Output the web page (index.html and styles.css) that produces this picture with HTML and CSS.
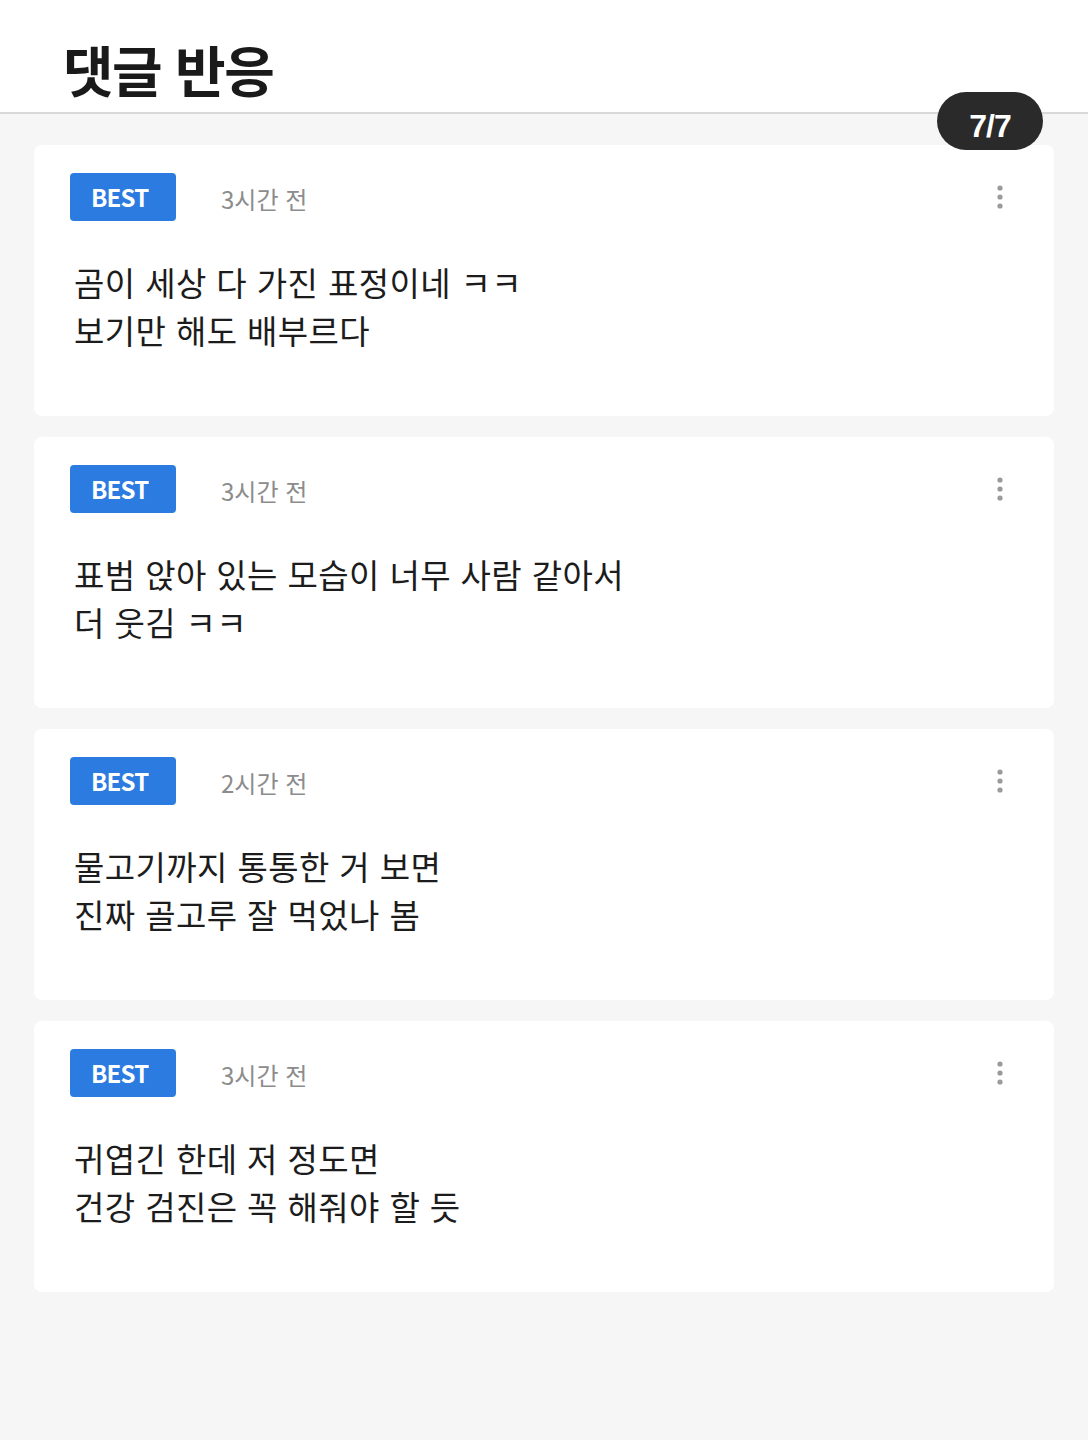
FILE: index.html
```html
<!DOCTYPE html>
<html lang="ko">
<head>
<meta charset="utf-8">
<title>댓글 반응</title>
<link rel="stylesheet" href="styles.css">
</head>
<body>
<header class="header">
  <h1 class="title">댓글 반응</h1>
</header>
<div class="counter">7/7</div>
<main class="list">
  <article class="card">
    <div class="meta">
      <span class="best">BEST</span>
      <span class="time">3시간 전</span>
      <svg class="more" width="8" height="24" viewBox="0 0 8 24"><circle cx="4" cy="3" r="2.6"/><circle cx="4" cy="12" r="2.6"/><circle cx="4" cy="21" r="2.6"/></svg>
    </div>
    <p class="text">곰이 세상 다 가진 표정이네 ㅋㅋ<br>보기만 해도 배부르다</p>
  </article>
  <article class="card">
    <div class="meta">
      <span class="best">BEST</span>
      <span class="time">3시간 전</span>
      <svg class="more" width="8" height="24" viewBox="0 0 8 24"><circle cx="4" cy="3" r="2.6"/><circle cx="4" cy="12" r="2.6"/><circle cx="4" cy="21" r="2.6"/></svg>
    </div>
    <p class="text">표범 앉아 있는 모습이 너무 사람 같아서<br>더 웃김 ㅋㅋ</p>
  </article>
  <article class="card">
    <div class="meta">
      <span class="best">BEST</span>
      <span class="time">2시간 전</span>
      <svg class="more" width="8" height="24" viewBox="0 0 8 24"><circle cx="4" cy="3" r="2.6"/><circle cx="4" cy="12" r="2.6"/><circle cx="4" cy="21" r="2.6"/></svg>
    </div>
    <p class="text">물고기까지 통통한 거 보면<br>진짜 골고루 잘 먹었나 봄</p>
  </article>
  <article class="card">
    <div class="meta">
      <span class="best">BEST</span>
      <span class="time">3시간 전</span>
      <svg class="more" width="8" height="24" viewBox="0 0 8 24"><circle cx="4" cy="3" r="2.6"/><circle cx="4" cy="12" r="2.6"/><circle cx="4" cy="21" r="2.6"/></svg>
    </div>
    <p class="text">귀엽긴 한데 저 정도면<br>건강 검진은 꼭 해줘야 할 듯</p>
  </article>
</main>
</body>
</html>
```
FILE: styles.css
```css
html, body {
  margin: 0;
  padding: 0;
}
body {
  background: #f6f6f6;
  font-family: "Noto Sans CJK KR", "Noto Sans", sans-serif;
  color: #1c1c1c;
  width: 1088px;
  min-height: 1440px;
  position: relative;
}
.header {
  height: 114px;
  box-sizing: border-box;
  background: #fff;
  border-bottom: 2px solid #d9d9d9;
  padding: 0 0 0 63px;
  display: flex;
  align-items: center;
}
.title {
  margin: 24px 0 0 0;
  font-size: 55px;
  font-weight: 700;
  letter-spacing: -1.5px;
  line-height: 1;
  color: #1a1a1a;
}
.counter {
  position: absolute;
  top: 92px;
  right: 45px;
  width: 106px;
  height: 58px;
  box-sizing: border-box;
  padding-top: 10px;
  border-radius: 29px;
  background: #2a2a2a;
  color: #fff;
  font-family: "Liberation Sans", Arial, sans-serif;
  font-weight: 700;
  font-size: 32px;
  letter-spacing: -1px;
  display: flex;
  align-items: center;
  justify-content: center;
}
.list {
  padding: 31px 34px;
  display: flex;
  flex-direction: column;
  gap: 21px;
}
.card {
  background: #fff;
  border-radius: 8px;
  height: 271px;
  box-sizing: border-box;
  padding: 28px 36px;
}
.meta {
  display: flex;
  align-items: center;
  height: 48px;
}
.best {
  width: 106px;
  height: 48px;
  box-sizing: border-box;
  padding-left: 21px;
  border-radius: 4px;
  background: #2b7be0;
  color: #fff;
  font-weight: 700;
  font-size: 24px;
  letter-spacing: -0.8px;
  display: flex;
  align-items: center;
  padding-bottom: 2px;
}
.time {
  margin-left: 45px;
  font-size: 24px;
  color: #8c8c8c;
  padding-top: 3px;
}
.more {
  margin-left: auto;
  margin-right: 14px;
  fill: #9a9a9a;
}
.text {
  margin: 37px 0 0 4px;
  font-size: 33px;
  line-height: 48px;
  letter-spacing: 0.4px;
  color: #1c1c1c;
}
```
